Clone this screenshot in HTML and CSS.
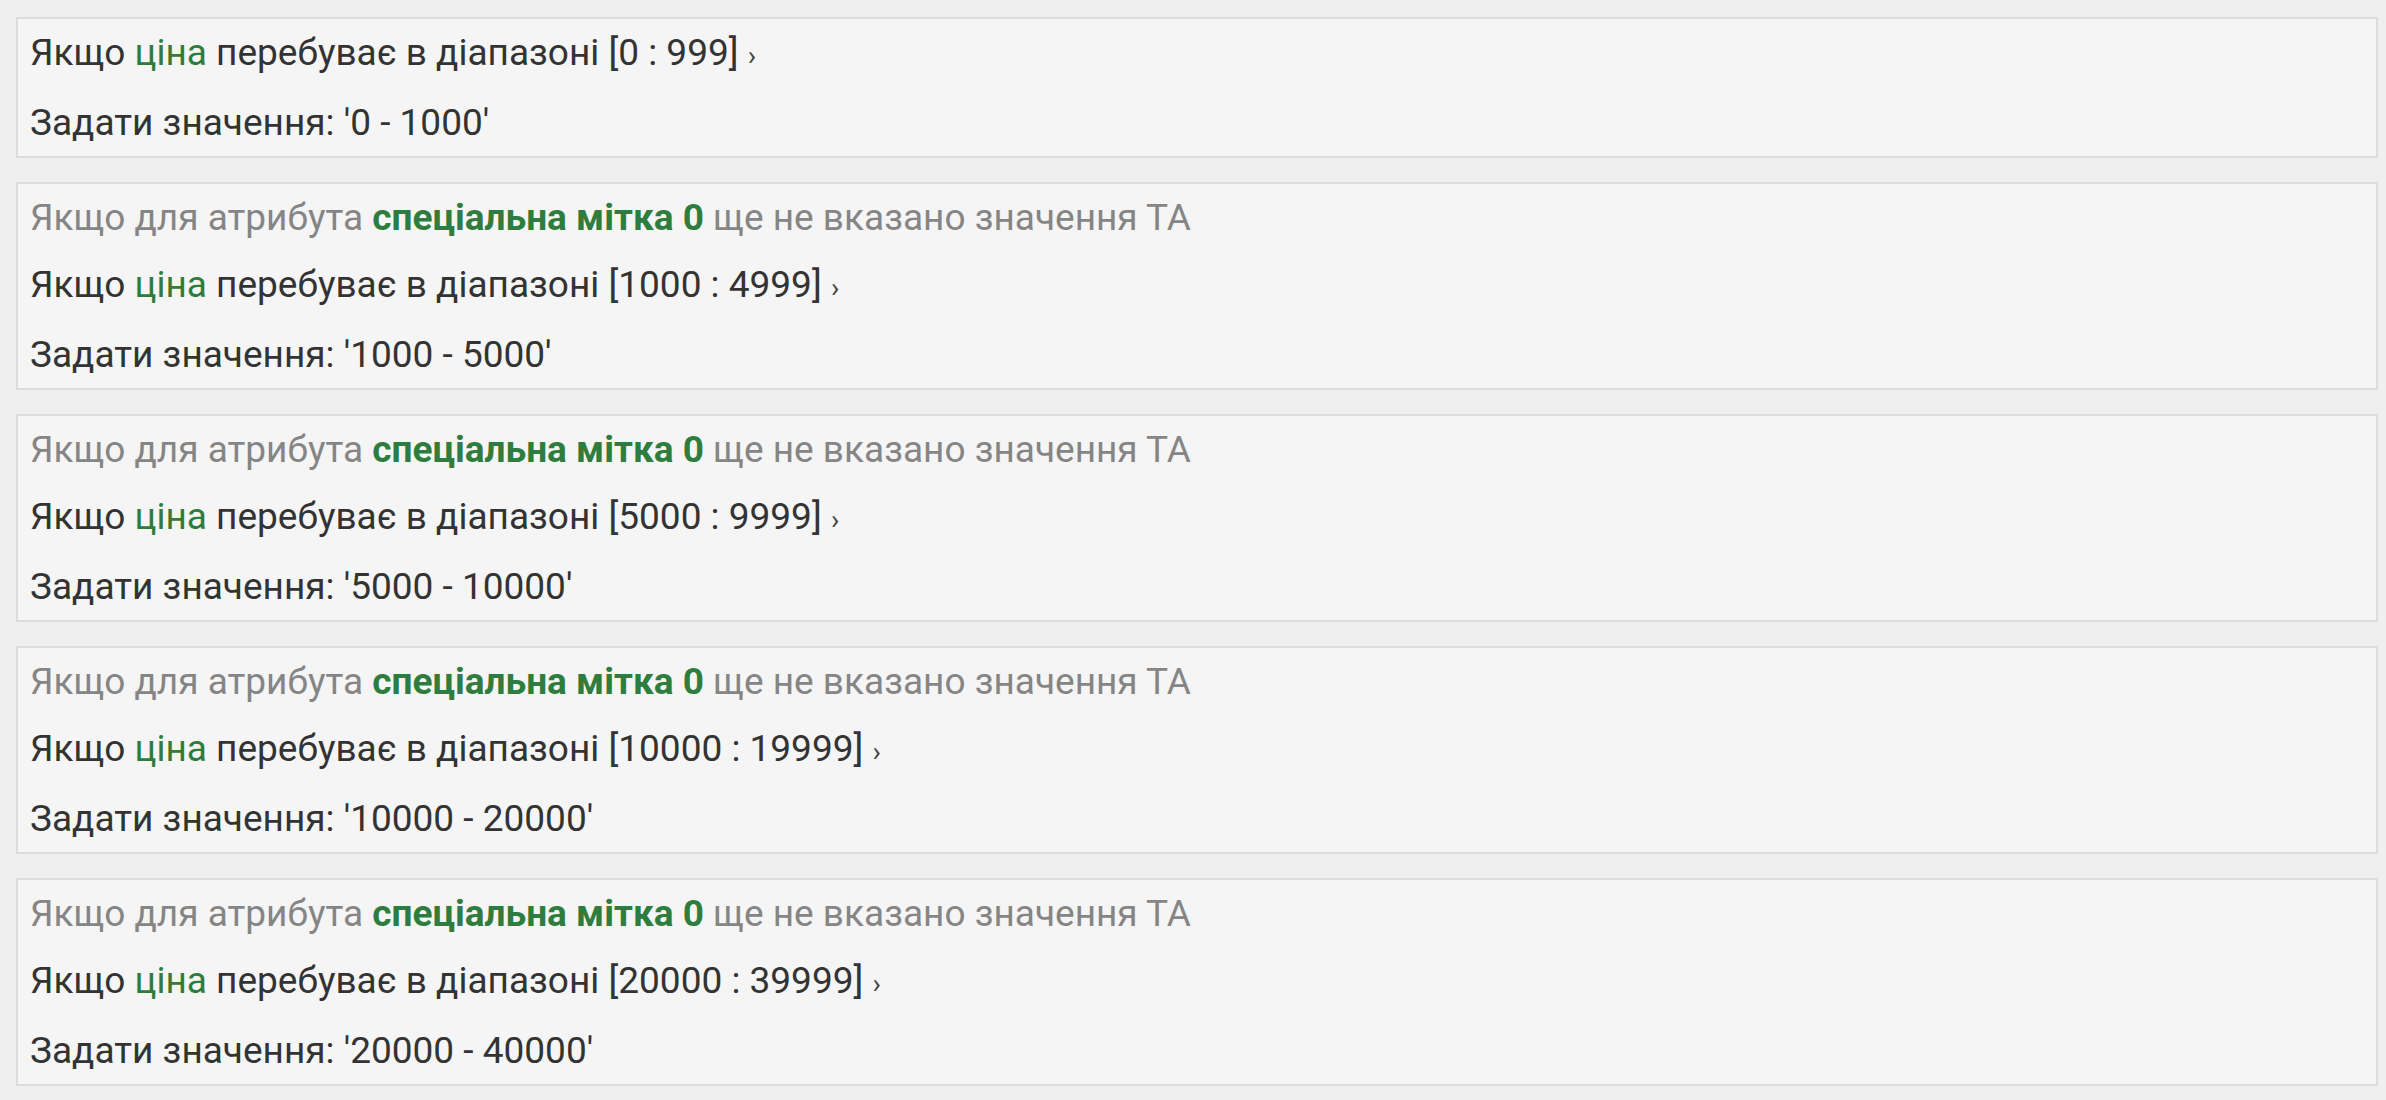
FILE: index.html
```html
<!DOCTYPE html>
<html lang="uk">
<head>
<meta charset="utf-8">
<title>Rules</title>
<link rel="stylesheet" href="styles.css">
</head>
<body>
<div class="list">
  <div class="rule">
    <div class="line">Якщо <span class="attr">ціна</span> перебуває в діапазоні [0 : 999] <span class="arrow">›</span></div>
    <div class="line">Задати значення: '0 - 1000'</div>
  </div>
  <div class="rule">
    <div class="line muted">Якщо для атрибута <b class="attr">спеціальна мітка 0</b> ще не вказано значення ТА</div>
    <div class="line">Якщо <span class="attr">ціна</span> перебуває в діапазоні [1000 : 4999] <span class="arrow">›</span></div>
    <div class="line">Задати значення: '1000 - 5000'</div>
  </div>
  <div class="rule">
    <div class="line muted">Якщо для атрибута <b class="attr">спеціальна мітка 0</b> ще не вказано значення ТА</div>
    <div class="line">Якщо <span class="attr">ціна</span> перебуває в діапазоні [5000 : 9999] <span class="arrow">›</span></div>
    <div class="line">Задати значення: '5000 - 10000'</div>
  </div>
  <div class="rule">
    <div class="line muted">Якщо для атрибута <b class="attr">спеціальна мітка 0</b> ще не вказано значення ТА</div>
    <div class="line">Якщо <span class="attr">ціна</span> перебуває в діапазоні [10000 : 19999] <span class="arrow">›</span></div>
    <div class="line">Задати значення: '10000 - 20000'</div>
  </div>
  <div class="rule">
    <div class="line muted">Якщо для атрибута <b class="attr">спеціальна мітка 0</b> ще не вказано значення ТА</div>
    <div class="line">Якщо <span class="attr">ціна</span> перебуває в діапазоні [20000 : 39999] <span class="arrow">›</span></div>
    <div class="line">Задати значення: '20000 - 40000'</div>
  </div>
</div>
</body>
</html>
```

FILE: styles.css
```css
html, body {
  margin: 0;
  padding: 0;
  background: #efefef;
}
body {
  font-family: Roboto, "Noto Sans", sans-serif;
  font-size: 37px;
  color: #333333;
}
.list {
  display: flex;
  flex-direction: column;
  gap: 24px;
  padding: 17px 8px 0 16px;
}
.rule {
  background: #f5f5f5;
  border: 2px solid #dcdcdc;
  padding: 0 12px;
}
.line {
  line-height: 67px;
  white-space: nowrap;
}
.muted {
  color: #858585;
}
.attr {
  color: #2e7d3e;
}
b.attr {
  font-weight: 700;
}
.arrow {
  font-size: 28px;
  color: #444;
}
```
